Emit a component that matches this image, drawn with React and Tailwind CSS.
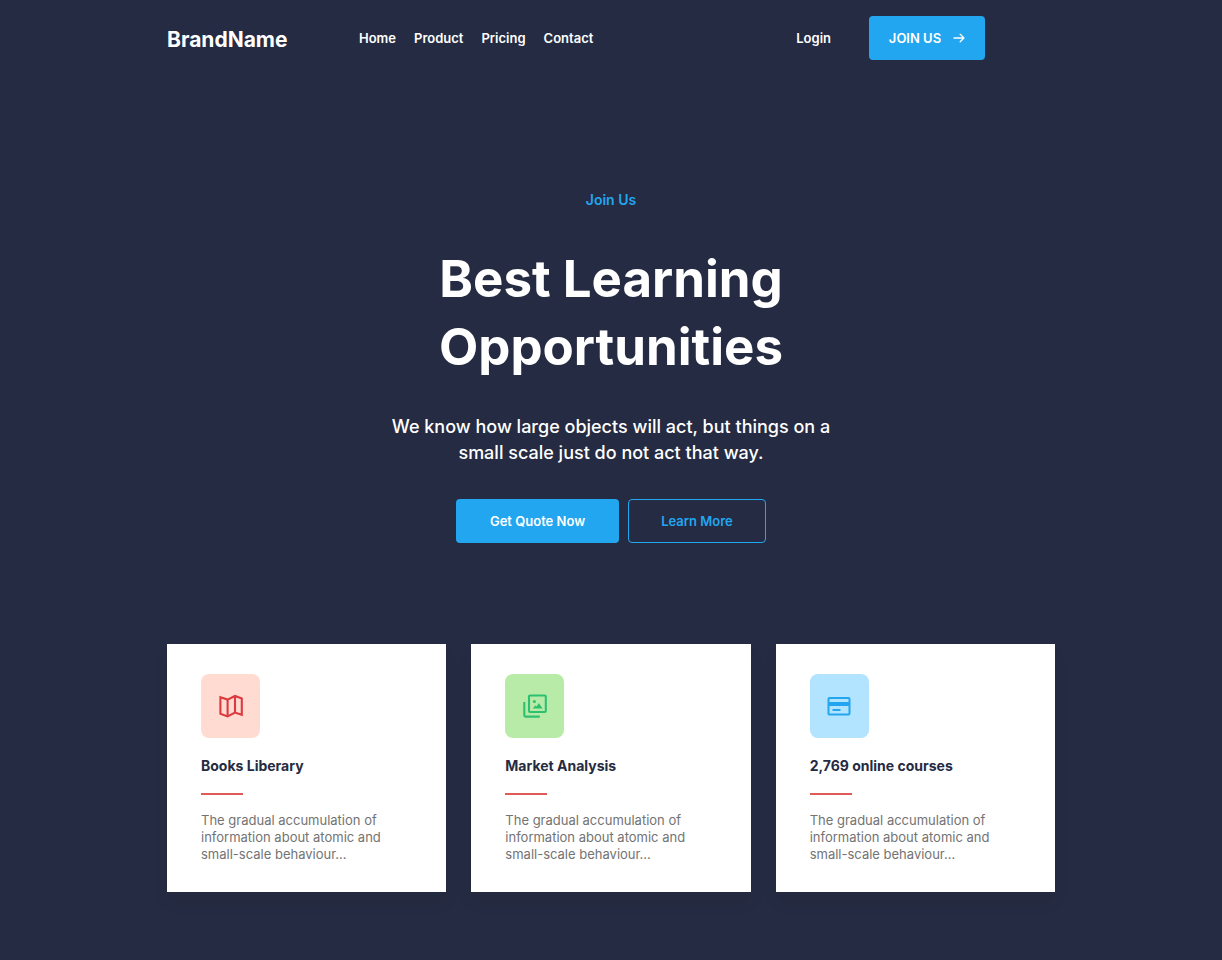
import React from "react";

const navLinks = ["Home", "Product", "Pricing", "Contact"];

function MapIcon() {
  return (
    <svg viewBox="0 0 24 24" className="size-6" fill="none" stroke="#db3b3f" strokeWidth="2.1" strokeLinejoin="miter" aria-hidden="true">
      <path d="M1.4 3.2 8.6 5.6 16 2 22.8 4.4V20.8L16 18.6 8.6 22.4 1.4 19.8Z" />
      <path d="M8.6 5.6V22.4M16 2V18.6" />
    </svg>
  );
}

function GalleryIcon() {
  return (
    <svg viewBox="0 0 24 24" className="size-6" fill="none" stroke="#2dc071" strokeWidth="2.1" aria-hidden="true">
      <rect x="6" y="1.5" width="16.8" height="16.5" rx="1" />
      <path d="M1.3 8V21.3Q1.3 22.6 2.6 22.6H16.8" />
      <circle cx="11.4" cy="7.5" r="1.5" fill="#2dc071" stroke="none" />
      <path d="M9.8 14.6 12.3 11.5 13.6 12.6 15.8 9 19.6 14.6Z" fill="#2dc071" stroke="none" />
    </svg>
  );
}

function CardIcon() {
  return (
    <svg viewBox="0 0 24 24" className="size-6" fill="none" stroke="#23a6f0" strokeWidth="2" aria-hidden="true">
      <rect x="1.5" y="4" width="21" height="16.6" rx="1" />
      <path d="M1.5 10H22.5" strokeWidth="4" />
      <path d="M5.5 16H13.5" />
    </svg>
  );
}

const features = [
  { title: "Books Liberary", tile: "bg-[#ffdbd1]", Icon: MapIcon },
  { title: "Market Analysis", tile: "bg-[#b9eba8]", Icon: GalleryIcon },
  { title: "2,769 online courses", tile: "bg-[#b2e3ff]", Icon: CardIcon },
];

export default function App() {
  return (
    <div className="min-h-screen bg-[#252b42] px-6 pb-16 font-['Inter',sans-serif] text-white">
      <div className="mx-auto max-w-[888px]">
        <header className="flex flex-wrap items-center gap-y-4 pt-4 md:mr-[70px]">
          <a href="#" className="mt-1 w-48 text-[21px] leading-8 font-bold">BrandName</a>
          <nav className="flex flex-1 gap-[18px] text-[13px] leading-5 font-semibold">
            {navLinks.map((name) => (
              <a key={name} href="#">{name}</a>
            ))}
          </nav>
          <div className="flex items-center gap-[38px] text-[13px] leading-5 font-semibold">
            <a href="#">Login</a>
            <button type="button" className="flex h-11 w-[116px] items-center justify-center gap-3 rounded bg-[#23a6f0]">
              JOIN US
              <svg viewBox="0 0 12 10" className="h-[10px] w-3" fill="none" stroke="currentColor" strokeWidth="1.3" strokeLinecap="round" strokeLinejoin="round" aria-hidden="true">
                <path d="M1 5H11M7.2 1.2 11 5 7.2 8.8" />
              </svg>
            </button>
          </div>
        </header>

        <main>
          <section className="flex flex-col items-center pt-[130px] text-center">
            <p className="text-sm leading-5 font-semibold text-[#23a6f0]">Join Us</p>
            <h1 className="mt-[35px] max-w-[440px] text-[51px] leading-[68px] font-bold">Best Learning Opportunities</h1>
            <p className="mt-[33px] max-w-[470px] text-lg leading-[26px] font-medium">
              We know how large objects will act, but things on a small scale just do not act that way.
            </p>
            <div className="mt-[33px] flex gap-[9px] text-[13px] leading-5 font-semibold">
              <button type="button" className="h-11 w-[163px] rounded bg-[#23a6f0]">Get Quote Now</button>
              <button type="button" className="h-11 w-[138px] rounded border border-[#23a6f0] text-[#23a6f0]">Learn More</button>
            </div>
          </section>

          <section className="mt-[101px] grid gap-[25px] md:grid-cols-3">
            {features.map(({ title, tile, Icon }) => (
              <article key={title} className="bg-white px-[34px] pt-[30px] pb-[29px] shadow-[0_11px_16px_rgba(0,0,0,0.05)]">
                <div className={`flex h-16 w-[59px] items-center justify-center rounded-lg ${tile}`}>
                  <Icon />
                </div>
                <h2 className="mt-[18px] text-sm leading-5 font-bold text-[#252b42]">{title}</h2>
                <div className="mt-[17px] h-[2px] w-[42px] bg-[#e05a5a]" />
                <p className="mt-[17px] text-[13px] leading-[17px] text-[#737373]">
                  The gradual accumulation of information about atomic and small-scale behaviour...
                </p>
              </article>
            ))}
          </section>
        </main>
      </div>
    </div>
  );
}
